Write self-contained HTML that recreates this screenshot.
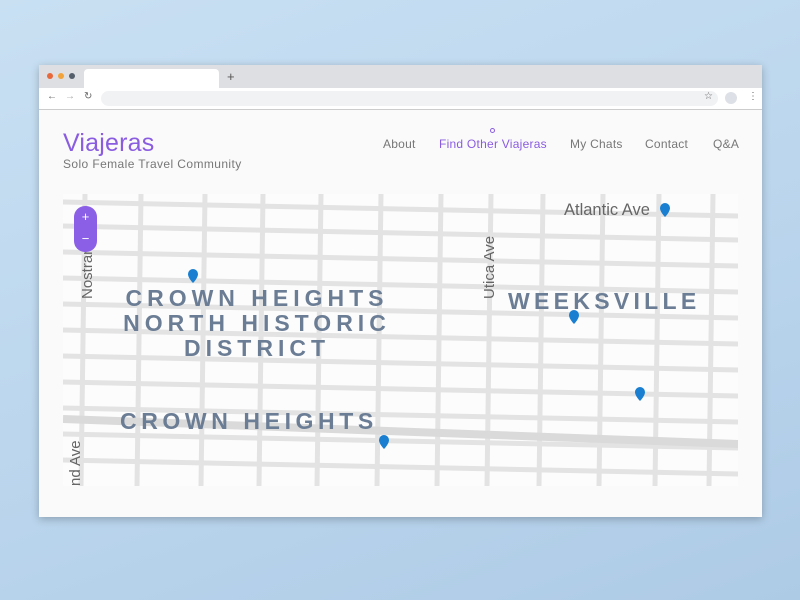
<!DOCTYPE html>
<html><head><meta charset="utf-8"><style>
body{margin:0;width:800px;height:600px;overflow:hidden;background:linear-gradient(160deg,#c9e0f3 0%,#b9d4ec 60%,#aecbe6 100%);font-family:"Liberation Sans",sans-serif;position:relative}
.win{position:absolute;left:39px;top:65px;width:723px;height:452px;background:#fafafa;box-shadow:0 2px 8px rgba(0,0,0,.25)}
.tabs{height:23px;background:#dedfe3;position:relative}
.dot{position:absolute;top:8px;width:6px;height:6px;border-radius:50%}
.tab{position:absolute;left:45px;top:4px;width:135px;height:19px;background:#fff;border-radius:4px 4px 0 0}
.addr{height:21px;background:#fff;border-bottom:1px solid #ccc;position:relative;font-size:10px;color:#666}
.bar{position:absolute;left:62px;top:3px;width:617px;height:15px;background:#f1f2f4;border-radius:8px}
.logo{position:absolute;left:24px;top:64px;font-size:25px;color:#8a5ce0;letter-spacing:.2px}
.sub{position:absolute;left:24px;top:92px;font-size:12px;color:#777;letter-spacing:.4px}
.nav{position:absolute;top:72px;font-size:12px;color:#777;letter-spacing:.25px}
.map{position:absolute;left:24px;top:129px;width:675px;height:292px;overflow:hidden;background:#fcfcfc}
.zoom{position:absolute;left:11px;top:12px;width:23px;height:46px;background:#8b5fe6;border-radius:11px;color:#fff;text-align:center;font-size:13px;line-height:22px}
.lbl{position:absolute;color:#6b7d95;font-weight:bold;letter-spacing:5px;font-size:23px;text-align:center;line-height:25px}
.st{position:absolute;color:#666;font-size:15px}
</style></head><body>
<div class="win">
 <div class="tabs">
  <div class="dot" style="left:8px;background:#e8683a"></div>
  <div class="dot" style="left:19px;background:#f2a33a"></div>
  <div class="dot" style="left:30px;background:#555f6b"></div>
  <div class="tab"></div>
  <div style="position:absolute;left:188px;top:4px;font-size:13px;color:#555">+</div>
 </div>
 <div class="addr">
  <span style="position:absolute;left:8px;top:3px">←</span><span style="position:absolute;left:26px;top:3px;color:#aaa">→</span><span style="position:absolute;left:45px;top:3px">↻</span>
  <div class="bar"></div>
  <span style="position:absolute;left:665px;top:3px">☆</span>
  <div style="position:absolute;left:686px;top:4px;width:12px;height:12px;border-radius:50%;background:#dde0e6"></div>
  <span style="position:absolute;left:709px;top:3px">⋮</span>
 </div>
 <div class="logo">Viajeras</div>
 <div class="sub">Solo Female Travel Community</div>
 <div class="nav" style="left:344px">About</div>
 <div class="nav" style="left:400px;color:#8a5ce0">Find Other Viajeras</div>
 <div style="position:absolute;left:451px;top:63px;width:3px;height:3px;border:1px solid #8a5ce0;border-radius:50%"></div>
 <div class="nav" style="left:531px">My Chats</div>
 <div class="nav" style="left:606px">Contact</div>
 <div class="nav" style="left:674px">Q&amp;A</div>
 <div class="map">
  <svg width="675" height="292" style="position:absolute;left:0;top:0">
   <g stroke="#e3e3e3" stroke-width="5" fill="none">
    <line x1="0" y1="8" x2="675" y2="22"/><line x1="0" y1="32" x2="675" y2="46"/><line x1="0" y1="58" x2="675" y2="72"/>
    <line x1="0" y1="84" x2="675" y2="98"/><line x1="0" y1="110" x2="675" y2="124"/><line x1="0" y1="136" x2="675" y2="150"/>
    <line x1="0" y1="162" x2="675" y2="176"/><line x1="0" y1="188" x2="675" y2="202"/><line x1="0" y1="214" x2="675" y2="228"/>
    <line x1="0" y1="240" x2="675" y2="254"/><line x1="0" y1="266" x2="675" y2="280"/>
    <line x1="22" y1="0" x2="18" y2="292"/><line x1="78" y1="0" x2="74" y2="292"/><line x1="142" y1="0" x2="138" y2="292"/>
    <line x1="200" y1="0" x2="196" y2="292"/><line x1="258" y1="0" x2="254" y2="292"/><line x1="318" y1="0" x2="314" y2="292"/>
    <line x1="378" y1="0" x2="374" y2="292"/><line x1="428" y1="0" x2="424" y2="292"/><line x1="480" y1="0" x2="476" y2="292"/>
    <line x1="540" y1="0" x2="536" y2="292"/><line x1="596" y1="0" x2="592" y2="292"/><line x1="650" y1="0" x2="646" y2="292"/>
   </g>
   <line x1="0" y1="225" x2="675" y2="250" stroke="#dadada" stroke-width="8"/>
   <g fill="#1a7fd0">
    <path d="M125 80a5 5 0 0 1 10 0c0 4-5 9-5 9s-5-5-5-9z"/><path d="M506 121a5 5 0 0 1 10 0c0 4-5 9-5 9s-5-5-5-9z"/>
    <path d="M597 14a5 5 0 0 1 10 0c0 4-5 9-5 9s-5-5-5-9z"/><path d="M572 198a5 5 0 0 1 10 0c0 4-5 9-5 9s-5-5-5-9z"/>
    <path d="M316 246a5 5 0 0 1 10 0c0 4-5 9-5 9s-5-5-5-9z"/>
   </g>
  </svg>
  <div class="lbl" style="left:44px;top:92px;width:300px">CROWN HEIGHTS<br>NORTH HISTORIC<br>DISTRICT</div>
  <div class="lbl" style="left:57px;top:215px;letter-spacing:4.6px">CROWN HEIGHTS</div>
  <div class="lbl" style="left:445px;top:95px;letter-spacing:4.3px">WEEKSVILLE</div>
  <div class="st" style="left:501px;top:7px;font-size:16.5px">Atlantic Ave</div>
  <div class="st" style="left:418px;top:105px;transform:rotate(-90deg);transform-origin:0 0">Utica Ave</div>
  <div class="st" style="left:16px;top:105px;transform:rotate(-90deg);transform-origin:0 0">Nostrand Ave</div>
  <div class="st" style="left:4px;top:292px;transform:rotate(-90deg);transform-origin:0 0">nd Ave</div>
  <div class="zoom">+<br>−</div>
 </div>
</div>
</body></html>
